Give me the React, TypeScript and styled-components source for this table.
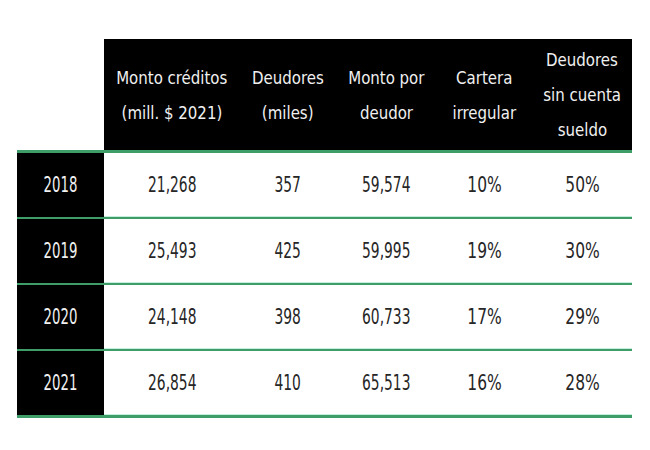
import React from "react";
import styled, { createGlobalStyle } from "styled-components";

const GlobalStyle = createGlobalStyle`
  html, body {
    margin: 0;
    padding: 0;
    background: #ffffff;
  }
  body {
    font-family: "DejaVu Sans Condensed", "DejaVu Sans", sans-serif;
  }
`;

const Page = styled.div`
  width: 650px;
  height: 450px;
  padding: 39px 0 0 17px;
  box-sizing: border-box;
`;

const Table = styled.table`
  border-collapse: separate;
  border-spacing: 0;
  table-layout: fixed;
  width: 615px;
`;

const HeadCell = styled.th<{ $blank?: boolean }>`
  height: 111px;
  padding: 0;
  background: ${({ $blank }) => ($blank ? "#ffffff" : "#000000")};
  color: #f0f0f0;
  font-size: 18.5px;
  font-weight: 400;
  line-height: 35px;
  text-align: center;
  vertical-align: middle;
  border-bottom: 3px solid #3f9d68;
`;

// the source table is set in a narrow face, so squeeze the glyphs sideways
const Narrow = styled.span<{ $squeeze: number }>`
  display: inline-block;
  white-space: nowrap;
  transform: scaleX(${({ $squeeze }) => $squeeze});
`;

const HeadLine = styled.div`
  white-space: nowrap;
`;

const YearCell = styled.td<{ $last?: boolean }>`
  height: 64px;
  padding: 0;
  background: #000000;
  color: #f0f0f0;
  font-size: 20.5px;
  text-align: center;
  vertical-align: middle;
  border-bottom: ${({ $last }) => ($last ? "3px" : "2px")} solid #3f9d68;
`;

const Cell = styled.td<{ $last?: boolean }>`
  height: 64px;
  padding: 0;
  color: #262626;
  font-size: 20.5px;
  text-align: center;
  vertical-align: middle;
  border-bottom: ${({ $last }) => ($last ? "3px" : "2px")} solid #3f9d68;
  box-shadow: inset 0 -1px 0 #c4efdf;
`;

const widths = [87, 136, 96, 100, 96, 100];

const headers: string[][] = [
  ["Monto créditos", "(mill. $ 2021)"],
  ["Deudores", "(miles)"],
  ["Monto por", "deudor"],
  ["Cartera", "irregular"],
  ["Deudores", "sin cuenta", "sueldo"],
];

const rows = [
  ["2018", "21,268", "357", "59,574", "10%", "50%"],
  ["2019", "25,493", "425", "59,995", "19%", "30%"],
  ["2020", "24,148", "398", "60,733", "17%", "29%"],
  ["2021", "26,854", "410", "65,513", "16%", "28%"],
];

export default function App() {
  return (
    <Page>
      <GlobalStyle />
      <Table>
        <colgroup>
          {widths.map((w, i) => (
            <col key={i} style={{ width: w }} />
          ))}
        </colgroup>
        <thead>
          <tr>
            <HeadCell $blank />
            {headers.map((lines, i) => (
              <HeadCell key={i}>
                {lines.map((l, j) => (
                  <HeadLine key={j}>
                    <Narrow $squeeze={0.9}>{l}</Narrow>
                  </HeadLine>
                ))}
              </HeadCell>
            ))}
          </tr>
        </thead>
        <tbody>
          {rows.map((r, i) => {
            const last = i === rows.length - 1;
            return (
              <tr key={r[0]}>
                <YearCell $last={last}>
                  <Narrow $squeeze={0.72}>{r[0]}</Narrow>
                </YearCell>
                {r.slice(1).map((v, j) => (
                  <Cell key={j} $last={last}>
                    <Narrow $squeeze={v.endsWith("%") ? 0.84 : 0.75}>{v}</Narrow>
                  </Cell>
                ))}
              </tr>
            );
          })}
        </tbody>
      </Table>
    </Page>
  );
}
